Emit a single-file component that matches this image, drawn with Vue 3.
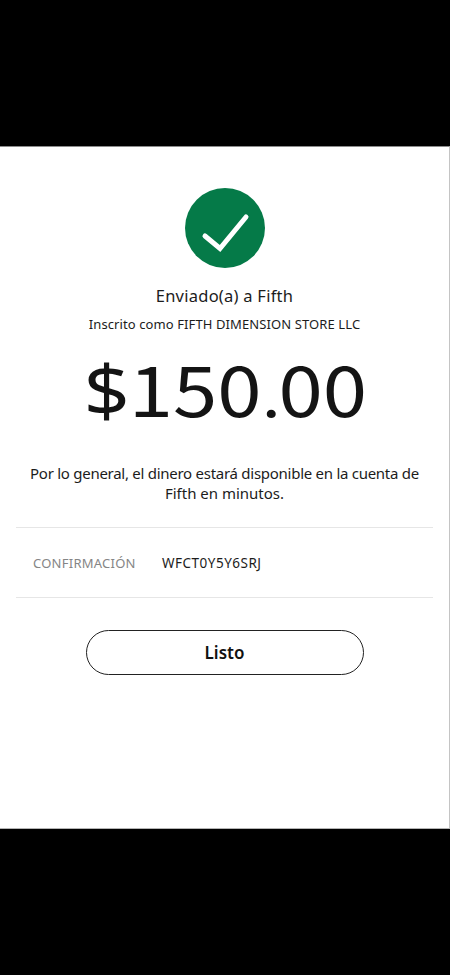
<template>
    <div class="screen">
        <div class="sheet">
            <svg class="check" viewBox="0 0 80 80">
                <circle cx="40" cy="40" r="40" fill="#057a48" />
                <path d="M20 48 L35 60.5 L61 29" fill="none" stroke="#fff" stroke-width="5" stroke-linecap="round" stroke-linejoin="miter" />
            </svg>

            <h1 class="title">Enviado(a) a {{payment.name}}</h1>
            <p class="enrolled">Inscrito como {{payment.enrolled}}</p>
            <div class="amount">
                <div class="digits"><span class="sign">$</span>{{payment.whole}}<span class="dot">.</span>{{payment.cents}}</div>
            </div>

            <div class="note">
                <p class="note_first">Por lo general, el dinero estará disponible en la cuenta de</p>
                <p>{{payment.name}} en minutos.</p>
            </div>

            <div class="confirm">
                <span class="confirm_label">CONFIRMACIÓN</span>
                <span class="confirm_code">{{payment.code}}</span>
            </div>

            <button class="done">Listo</button>
        </div>
    </div>
</template>

<script setup>
    const payment = {
        name: "Fifth",
        enrolled: "FIFTH DIMENSION STORE LLC",
        whole: "150",
        cents: "00",
        code: "WFCT0Y5Y6SRJ"
    };
</script>

<style>
    body{
        margin: 0;
        background-color: #000;
    }
</style>

<style scoped>
    .screen{
        box-sizing: border-box;
        width: 450px;
        height: 975px;
        padding-top: 146px;
        background-color: #000;
        font-family: "Noto Sans", "Open Sans", sans-serif;
        color: #1c1c1c;
    }
    .sheet{
        box-sizing: border-box;
        height: 683px;
        padding-top: 42px;
        background-color: #fff;
        border-top: 1px solid #8c8c8c;
        border-right: 1px solid #c4c4c4;
        border-bottom: 1px solid #b4b4b4;
        display: flex;
        flex-direction: column;
        align-items: center;
    }
    .sheet p, .sheet h1{
        margin: 0;
        font-weight: 400;
        white-space: nowrap;
    }
    .check{
        width: 80px;
        height: 80px;
        margin-top: -1px;
        flex: none;
    }
    .sheet .title{
        margin-top: 16px;
        font-size: 16.5px;
        line-height: 24px;
        letter-spacing: 0.25px;
    }
    .sheet .enrolled{
        margin-top: 6px;
        font-size: 13px;
        line-height: 20px;
        letter-spacing: 0.1px;
    }
    .amount{
        height: 78px;
        margin-top: 14px;
        font-family: "Noto Sans CJK SC", sans-serif;
        font-size: 70px;
        line-height: 78px;
        color: #141414;
    }
    .digits{
        transform: translateX(1px) scaleX(1.14);
    }
    .sign{
        font-family: "Noto Sans", sans-serif;
        font-size: 71px;
        line-height: 1;
        letter-spacing: -1px;
    }
    .dot{
        font-size: 60px;
        line-height: 1;
        letter-spacing: -2px;
    }
    .note{
        margin-top: 37px;
        font-size: 15px;
        line-height: 20px;
        text-align: center;
    }
    .sheet .note_first{
        letter-spacing: -0.27px;
    }
    .confirm{
        box-sizing: border-box;
        width: 417px;
        height: 71px;
        margin-top: 24px;
        padding-left: 17px;
        border-top: 1px solid #e6e6e6;
        border-bottom: 1px solid #e6e6e6;
        display: flex;
        align-items: center;
        font-size: 13px;
        line-height: 20px;
    }
    .confirm_label{
        width: 129px;
        letter-spacing: 0.25px;
        color: #858585;
    }
    .confirm_code{
        font-size: 13.5px;
        letter-spacing: 0.5px;
    }
    .done{
        box-sizing: border-box;
        width: 278px;
        height: 45px;
        margin-top: 32px;
        padding: 0;
        background-color: #fff;
        border: 1px solid #222;
        border-radius: 23px;
        font-family: inherit;
        font-size: 17px;
        font-weight: 600;
        line-height: 24px;
        color: #111;
    }
</style>
